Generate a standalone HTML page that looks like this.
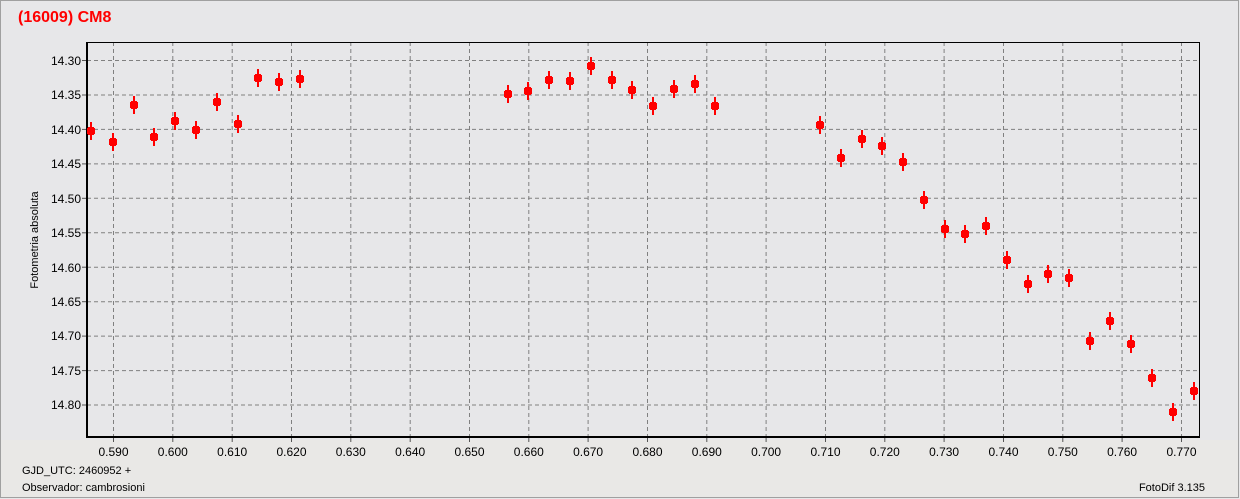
<!DOCTYPE html>
<html><head><meta charset="utf-8"><style>
html,body{margin:0;padding:0;background:#e7e7e9;}
svg{display:block;font-family:"Liberation Sans",Arial,sans-serif;}
</style></head><body>
<svg width="1240" height="499" viewBox="0 0 1240 499" xmlns="http://www.w3.org/2000/svg">
<defs><g id="p"><rect x="-1" y="-9" width="2" height="18" fill="#f00"/><rect x="-4" y="-3" width="8" height="6" fill="#f00"/><rect x="-3" y="-4" width="6" height="8" fill="#f00"/></g></defs>
<rect x="0.5" y="0.5" width="1238" height="497" fill="#e7e7e9" stroke="#a0a0a0"/>
<rect x="1" y="440" width="1237" height="57" fill="#e9e8e6"/>
<text x="18" y="22" font-size="16" font-weight="bold" fill="#ff0000">(16009) CM8</text>
<g stroke="#808080" stroke-dasharray="4,3" stroke-width="1">
<line x1="113.5" y1="42" x2="113.5" y2="437"/><line x1="172.8" y1="42" x2="172.8" y2="437"/><line x1="232.2" y1="42" x2="232.2" y2="437"/><line x1="291.5" y1="42" x2="291.5" y2="437"/><line x1="350.8" y1="42" x2="350.8" y2="437"/><line x1="410.2" y1="42" x2="410.2" y2="437"/><line x1="469.5" y1="42" x2="469.5" y2="437"/><line x1="528.8" y1="42" x2="528.8" y2="437"/><line x1="588.1" y1="42" x2="588.1" y2="437"/><line x1="647.5" y1="42" x2="647.5" y2="437"/><line x1="706.8" y1="42" x2="706.8" y2="437"/><line x1="766.1" y1="42" x2="766.1" y2="437"/><line x1="825.5" y1="42" x2="825.5" y2="437"/><line x1="884.8" y1="42" x2="884.8" y2="437"/><line x1="944.1" y1="42" x2="944.1" y2="437"/><line x1="1003.5" y1="42" x2="1003.5" y2="437"/><line x1="1062.8" y1="42" x2="1062.8" y2="437"/><line x1="1122.1" y1="42" x2="1122.1" y2="437"/><line x1="1181.5" y1="42" x2="1181.5" y2="437"/>
<line x1="87" y1="60.5" x2="1199" y2="60.5"/><line x1="87" y1="95" x2="1199" y2="95"/><line x1="87" y1="129.4" x2="1199" y2="129.4"/><line x1="87" y1="163.9" x2="1199" y2="163.9"/><line x1="87" y1="198.3" x2="1199" y2="198.3"/><line x1="87" y1="232.8" x2="1199" y2="232.8"/><line x1="87" y1="267.2" x2="1199" y2="267.2"/><line x1="87" y1="301.7" x2="1199" y2="301.7"/><line x1="87" y1="336.1" x2="1199" y2="336.1"/><line x1="87" y1="370.6" x2="1199" y2="370.6"/><line x1="87" y1="405" x2="1199" y2="405"/>
</g>
<g stroke="#000">
<line x1="87" y1="42.5" x2="1199" y2="42.5" stroke-width="1"/>
<line x1="1199.5" y1="42" x2="1199.5" y2="438" stroke-width="1"/>
<line x1="87" y1="42" x2="87" y2="438" stroke-width="2"/>
<line x1="86" y1="437" x2="1200" y2="437" stroke-width="2"/>
</g>
<g stroke="#555" stroke-width="1">
<line x1="82" y1="60.5" x2="86" y2="60.5"/><line x1="82" y1="95" x2="86" y2="95"/><line x1="82" y1="129.4" x2="86" y2="129.4"/><line x1="82" y1="163.9" x2="86" y2="163.9"/><line x1="82" y1="198.3" x2="86" y2="198.3"/><line x1="82" y1="232.8" x2="86" y2="232.8"/><line x1="82" y1="267.2" x2="86" y2="267.2"/><line x1="82" y1="301.7" x2="86" y2="301.7"/><line x1="82" y1="336.1" x2="86" y2="336.1"/><line x1="82" y1="370.6" x2="86" y2="370.6"/><line x1="82" y1="405" x2="86" y2="405"/>
<line x1="113.5" y1="438" x2="113.5" y2="442"/><line x1="172.8" y1="438" x2="172.8" y2="442"/><line x1="232.2" y1="438" x2="232.2" y2="442"/><line x1="291.5" y1="438" x2="291.5" y2="442"/><line x1="350.8" y1="438" x2="350.8" y2="442"/><line x1="410.2" y1="438" x2="410.2" y2="442"/><line x1="469.5" y1="438" x2="469.5" y2="442"/><line x1="528.8" y1="438" x2="528.8" y2="442"/><line x1="588.1" y1="438" x2="588.1" y2="442"/><line x1="647.5" y1="438" x2="647.5" y2="442"/><line x1="706.8" y1="438" x2="706.8" y2="442"/><line x1="766.1" y1="438" x2="766.1" y2="442"/><line x1="825.5" y1="438" x2="825.5" y2="442"/><line x1="884.8" y1="438" x2="884.8" y2="442"/><line x1="944.1" y1="438" x2="944.1" y2="442"/><line x1="1003.5" y1="438" x2="1003.5" y2="442"/><line x1="1062.8" y1="438" x2="1062.8" y2="442"/><line x1="1122.1" y1="438" x2="1122.1" y2="442"/><line x1="1181.5" y1="438" x2="1181.5" y2="442"/>
</g>
<g font-size="12" fill="#000" text-anchor="end">
<text x="81" y="65">14.30</text><text x="81" y="99">14.35</text><text x="81" y="134">14.40</text><text x="81" y="168">14.45</text><text x="81" y="203">14.50</text><text x="81" y="237">14.55</text><text x="81" y="272">14.60</text><text x="81" y="306">14.65</text><text x="81" y="340">14.70</text><text x="81" y="375">14.75</text><text x="81" y="409">14.80</text>
</g>
<g font-size="12" fill="#000" text-anchor="middle">
<text x="113.5" y="456">0.590</text><text x="172.8" y="456">0.600</text><text x="232.2" y="456">0.610</text><text x="291.5" y="456">0.620</text><text x="350.8" y="456">0.630</text><text x="410.2" y="456">0.640</text><text x="469.5" y="456">0.650</text><text x="528.8" y="456">0.660</text><text x="588.1" y="456">0.670</text><text x="647.5" y="456">0.680</text><text x="706.8" y="456">0.690</text><text x="766.1" y="456">0.700</text><text x="825.5" y="456">0.710</text><text x="884.8" y="456">0.720</text><text x="944.1" y="456">0.730</text><text x="1003.5" y="456">0.740</text><text x="1062.8" y="456">0.750</text><text x="1122.1" y="456">0.760</text><text x="1181.5" y="456">0.770</text>
</g>
<text transform="translate(38,240) rotate(-90)" font-size="11" text-anchor="middle" fill="#000">Fotometria absoluta</text>
<text x="22" y="474" font-size="11" fill="#000">GJD_UTC: 2460952 +</text>
<text x="22" y="491" font-size="11" fill="#000">Observador: cambrosioni</text>
<text x="1205" y="491" font-size="11" fill="#000" text-anchor="end">FotoDif 3.135</text>
<use href="#p" x="91" y="131"/>
<use href="#p" x="113" y="142"/><use href="#p" x="134" y="105"/><use href="#p" x="154" y="137"/><use href="#p" x="175" y="121"/><use href="#p" x="196" y="130"/><use href="#p" x="217" y="102"/><use href="#p" x="238" y="124"/><use href="#p" x="258" y="78"/><use href="#p" x="279" y="82"/><use href="#p" x="300" y="79"/>
<use href="#p" x="508" y="94"/><use href="#p" x="528" y="91"/><use href="#p" x="549" y="80"/><use href="#p" x="570" y="81"/><use href="#p" x="591" y="66"/><use href="#p" x="612" y="80"/><use href="#p" x="632" y="90"/><use href="#p" x="653" y="106"/><use href="#p" x="674" y="89"/><use href="#p" x="695" y="84"/><use href="#p" x="715" y="106"/>
<use href="#p" x="820" y="125"/><use href="#p" x="841" y="158"/><use href="#p" x="862" y="139"/><use href="#p" x="882" y="146"/><use href="#p" x="903" y="162"/><use href="#p" x="924" y="200"/><use href="#p" x="945" y="229"/><use href="#p" x="965" y="234"/><use href="#p" x="986" y="226"/><use href="#p" x="1007" y="260"/><use href="#p" x="1028" y="284"/><use href="#p" x="1048" y="274"/><use href="#p" x="1069" y="278"/><use href="#p" x="1090" y="341"/><use href="#p" x="1110" y="321"/><use href="#p" x="1131" y="344"/><use href="#p" x="1152" y="378"/><use href="#p" x="1173" y="412"/><use href="#p" x="1194" y="391"/>
</svg>
</body></html>
